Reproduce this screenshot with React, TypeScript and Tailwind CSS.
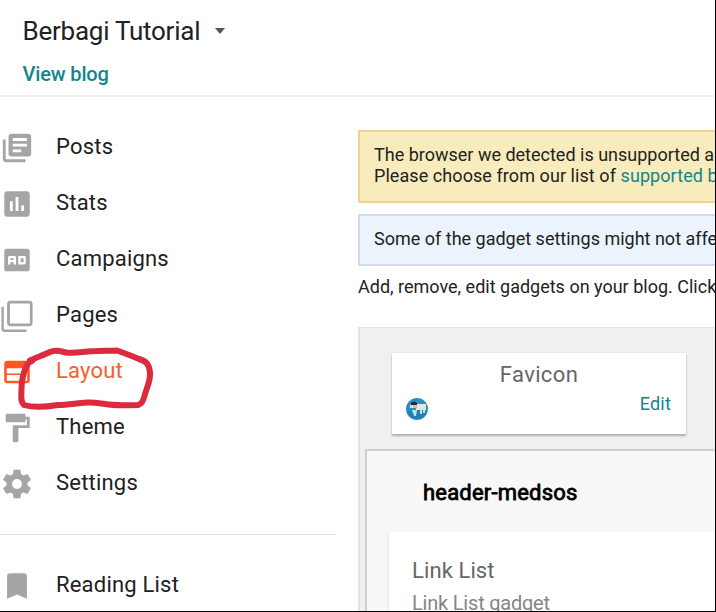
import type { ReactNode } from "react";

type NavItem = {
  label: string;
  icon: ReactNode;
  active?: boolean;
};

const navItems: NavItem[] = [
  {
    label: "Posts",
    icon: (
      <path d="M4 6H2v14c0 1.1.9 2 2 2h14v-2H4V6zm16-4H8c-1.1 0-2 .9-2 2v12c0 1.1.9 2 2 2h12c1.1 0 2-.9 2-2V4c0-1.1-.9-2-2-2zm-1 9H9V9h10v2zm-4 4H9v-2h6v2zm4-8H9V5h10v2z" />
    ),
  },
  {
    label: "Stats",
    icon: (
      <path d="M19 3H5c-1.1 0-2 .9-2 2v14c0 1.1.9 2 2 2h14c1.1 0 2-.9 2-2V5c0-1.1-.9-2-2-2zM9 17H7v-7h2v7zm4 0h-2V7h2v10zm4 0h-2v-4h2v4z" />
    ),
  },
  {
    label: "Campaigns",
    icon: (
      <path
        fillRule="evenodd"
        d="M4.7 4h14.6c.95 0 1.7.8 1.7 1.7v12.6c0 .95-.75 1.7-1.7 1.7H4.7c-.95 0-1.7-.75-1.7-1.7V5.7C3 4.8 3.75 4 4.7 4zM5.7 15.2V10.1c0-.55.45-1 1-1h3.6c.55 0 1 .45 1 1v5.1H9.6v-1.7H7.4v1.7zM7.4 10.7v1.3h2.2v-1.3zM12.9 9.1h4.3c.55 0 1 .45 1 1v4.1c0 .55-.45 1-1 1h-4.3zM14.6 10.7v2.9h2v-2.9z"
      />
    ),
  },
  {
    label: "Pages",
    icon: (
      <path
        fillRule="evenodd"
        d="M7 1.2h14c1.1 0 2 .9 2 2v14c0 1.1-.9 2-2 2H7c-1.1 0-2-.9-2-2v-14c0-1.1.9-2 2-2zM7 3.1v14.2h14.1V3.1zM1 5.500h1.700v16.100h16v1.700H3c-1.100 0-2-.9-2-2z"
      />
    ),
  },
  {
    label: "Layout",
    active: true,
    icon: (
      <path
        fillRule="evenodd"
        d="M5 4h14c1.1 0 2 .9 2 2v12c0 1.1-.9 2-2 2H5c-1.1 0-2-.9-2-2V6c0-1.1.9-2 2-2zM4.800 9.300v3.700h11.700V9.300zM4.800 14.200v3.900h11.700v-3.900zM17.700 9.300v8.800H19.200V9.300z"
      />
    ),
  },
  {
    label: "Theme",
    icon: (
      <path d="M18 4V3c0-.55-.45-1-1-1H5c-.55 0-1 .45-1 1v4c0 .55.45 1 1 1h12c.55 0 1-.45 1-1V6h1v4H9v11c0 .55.45 1 1 1h2c.55 0 1-.45 1-1v-9h8V4h-3z" />
    ),
  },
  {
    label: "Settings",
    icon: (
      <path d="M19.43 12.98c.04-.32.07-.64.07-.98s-.03-.66-.07-.98l2.11-1.65c.19-.15.24-.42.12-.64l-2-3.46c-.12-.22-.39-.3-.61-.22l-2.49 1c-.52-.4-1.08-.73-1.69-.98l-.38-2.65C14.46 2.18 14.25 2 14 2h-4c-.25 0-.46.18-.49.42l-.38 2.65c-.61.25-1.17.59-1.69.98l-2.49-1c-.23-.09-.49 0-.61.22l-2 3.46c-.13.22-.07.49.12.64l2.11 1.65c-.04.32-.07.65-.07.98s.03.66.07.98l-2.11 1.65c-.19.15-.24.42-.12.64l2 3.46c.12.22.39.3.61.22l2.49-1c.52.4 1.08.73 1.69.98l.38 2.65c.03.24.24.42.49.42h4c.25 0 .46-.18.49-.42l.38-2.65c.61-.25 1.17-.59 1.69-.98l2.49 1c.23.09.49 0 .61-.22l2-3.46c.12-.22.07-.49-.12-.64l-2.11-1.65zM12 15.5c-1.93 0-3.5-1.57-3.5-3.5s1.57-3.5 3.5-3.5 3.5 1.57 3.5 3.5-1.57 3.5-3.5 3.5z" />
    ),
  },
];

const readingList: NavItem = {
  label: "Reading List",
  icon: <path d="M17 3H7c-1.1 0-2 .9-2 2v16l7-3 7 3V5c0-1.1-.9-2-2-2z" />,
};

function NavRow({ item }: { item: NavItem }) {
  return (
    <li className="flex h-14 shrink-0 items-center">
      <svg
        viewBox="0 0 24 24"
        className={`size-[34px] shrink-0 ${item.active ? "fill-[#ff5722]" : "fill-[#a5a5a5]"}`}
      >
        {item.icon}
      </svg>
      <span
        className={`ml-[22px] pb-[3px] text-[22px] leading-[26px] tracking-[0.2px] ${
          item.active ? "text-[#f4602f]" : "text-[#212121]"
        }`}
      >
        {item.label}
      </span>
    </li>
  );
}

function Sidebar() {
  return (
    <nav className="relative w-[358px] shrink-0 pt-[23px]">
      <ul>
        {navItems.map((item) => (
          <NavRow key={item.label} item={item} />
        ))}
      </ul>
      <hr className="mt-[22px] mb-[23px] w-[336px] border-t border-[#e4e4e4]" />
      <ul>
        <NavRow item={readingList} />
      </ul>
      {/* hand-drawn circle around the active item */}
      <svg
        viewBox="0 0 160 70"
        className="absolute top-[246px] left-0 h-[70px] w-40"
        fill="none"
        stroke="#dc2a3e"
        strokeWidth="6"
        strokeLinecap="round"
        strokeLinejoin="round"
      >
        <path d="M30 17.500C36 14.500 44 12 50 9C55 6.500 60 8 66 9.500C75 10.500 83 8.500 97 8C105 7.500 111 8 117 7.500C124 10 132 13 139 16C146 18 149 21 150 29C151 38 146 46 144.500 53C143 58 142 61 138 62C126 62 116 63 105 61C98 60 94 59 87 59.500C77 60 68 62 58 62C46 64 34 65 24 62C20 59 21.500 52 21.500 46C21.500 38 23 31 26 24C27 21 29 19 32 18" />
      </svg>
    </nav>
  );
}

function FaviconCard() {
  return (
    <div className="ml-8 flex h-[81px] w-[294px] flex-col bg-white pt-[9px] shadow-[0_2px_2px_#a9b0ae,0_0_2px_#dcdcdc]">
      <h3 className="text-center text-[22px] leading-[26px] tracking-[0.35px] text-[#666]">
        Favicon
      </h3>
      <div className="flex justify-between pr-[15px] pl-[14px]">
        <svg viewBox="0 0 22 22" className="mt-[10px] size-[22px]">
          <circle cx="11" cy="11" r="11" fill="#2a8fc2" />
          <path d="M1 14Q11 10 21 14A11 11 0 0 1 1 14" fill="#247fb2" />
          <path d="M10 6h10v6H10z" fill="#dfe8dd" />
          <path d="M4 7h8v3H4z" fill="#d8dcd6" />
          <path d="M5 5q3-3 6 0v2H5z" fill="#1d2b36" />
          <path d="M7 7h4v3H7z" fill="#d9b8a5" />
          <path d="M6 12h5l-1 6H8zM14 12h2v4h-2zM17 12h2v3h-2z" fill="#b8e2f2" />
        </svg>
        <a className="mt-[5px] text-[18px] leading-[22px] tracking-[0.2px] text-[#12858a]">Edit</a>
      </div>
    </div>
  );
}

function LayoutEditor() {
  return (
    <section className="mt-[30px] flex h-[300px] flex-col border-t border-l-2 border-[#e3e3e3] bg-[#f0f0f0] pt-[25px]">
      <FaviconCard />
      <div className="mt-[15px] ml-[5px] flex flex-1 flex-col border-t-2 border-l-2 border-[#cfcfcf] bg-[#f8f8f8] pt-[29px]">
        <h3 className="ml-14 text-[22px] leading-[26px] tracking-[0.2px] text-black [-webkit-text-stroke:0.8px_black]">
          header-medsos
        </h3>
        <div className="mt-[26px] ml-[22px] flex-1 bg-white pt-[26px] pl-[23px] shadow-[0_1px_2px_#c4c4c4]">
          <p className="text-[22px] leading-[26px] tracking-[0.1px] text-[#666]">Link List</p>
          <p className="mt-[7px] text-[20px] leading-[24px] tracking-[-0.2px] text-[#858585]">
            Link List gadget
          </p>
        </div>
      </div>
    </section>
  );
}

export default function App() {
  return (
    <div className="flex h-[612px] w-[716px] flex-col overflow-hidden border-r border-b border-black bg-white font-['Roboto',sans-serif] whitespace-nowrap">
      <header className="h-[97px] shrink-0 border-b-2 border-[#eee] pt-[16px] pl-[22.5px]">
        <div className="flex items-center">
          <h1 className="text-[26px] leading-[30px] tracking-[-0.25px] text-[#212121]">
            Berbagi Tutorial
          </h1>
          <svg viewBox="0 0 10 6" className="ml-[15px] h-[6px] w-[10px] fill-[#555]">
            <path d="M0 0h10L5 6z" />
          </svg>
        </div>
        <a className="mt-[16px] block text-[20px] leading-[24px] font-medium tracking-[-0.15px] text-[#12858a]">
          View blog
        </a>
      </header>
      <div className="flex min-h-0 flex-1">
        <Sidebar />
        <main className="min-w-0 flex-1 overflow-hidden pt-[33px] text-[18px] leading-[21px] text-[#222]">
          <div className="-mr-4 h-[73px] border-2 border-[#efd293] bg-[#f8ecbd] pt-[12px] pl-[14px]">
            <p>The browser we detected is unsupported and</p>
            <p className="tracking-[0.07px]">
              Please choose from our list of{" "}
              <a className="text-[#12858a]">supported browsers</a>
            </p>
          </div>
          <div className="mt-[11px] -mr-4 h-[52px] border-2 border-[#d5daf0] bg-[#ebf4fd] pt-[12px] pl-[14px]">
            Some of the gadget settings might not affect
          </div>
          <p className="mt-[10px]">Add, remove, edit gadgets on your blog. Click</p>
          <LayoutEditor />
        </main>
      </div>
    </div>
  );
}
